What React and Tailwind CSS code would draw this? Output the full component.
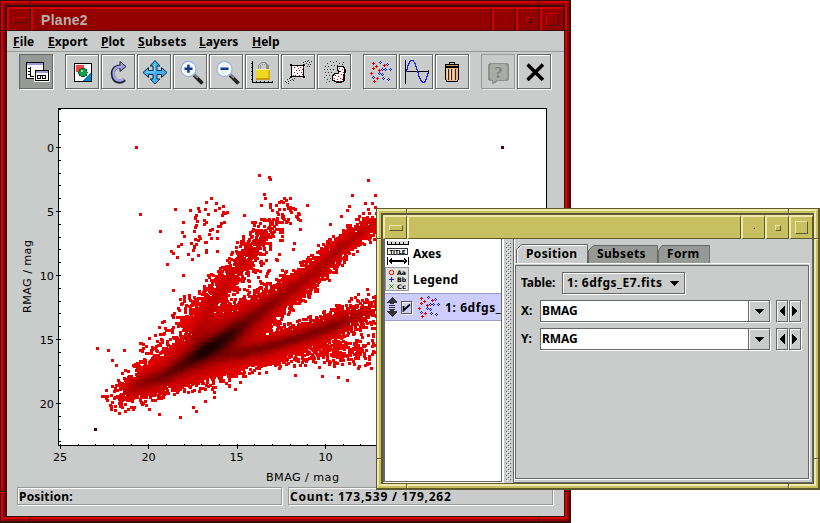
import React from "react";

const FONT = "font-['Noto_Sans','Open_Sans',sans-serif]";

/* ---------- window decorations ---------- */

const RED = {
  dark: "border-[#3a0c10]",
  tl: "border-t-[#d40003] border-l-[#d40003] border-r-[#940000] border-b-[#940000]",
  br: "border-t-[#940000] border-l-[#940000] border-r-[#d40003] border-b-[#d40003]",
  raised: "bg-[#940000] border-t-[#d40003] border-l-[#d40003] border-r-[#3a0c10] border-b-[#3a0c10]",
  sunk: "border-t-[#d40003] border-l-[#d40003] border-r-[#4a0c10] border-b-[#4a0c10]",
  menu: "border-t-[#c40003] border-l-[#c40003] border-r-[#4a0c10] border-b-[#4a0c10]",
  notchDark: "bg-[#3a0c10]",
  notchLight: "bg-[#d40003]",
};

const GOLD = {
  dark: "border-[#5f5930]",
  tl: "border-t-[#f0e9ab] border-l-[#f0e9ab] border-r-[#c8bf60] border-b-[#c8bf60]",
  br: "border-t-[#c8bf60] border-l-[#c8bf60] border-r-[#f0e9ab] border-b-[#f0e9ab]",
  raised: "bg-[#c8bf60] border-t-[#f0e9ab] border-l-[#f0e9ab] border-r-[#5f5930] border-b-[#5f5930]",
  sunk: "border-t-[#f0e9ab] border-l-[#f0e9ab] border-r-[#5f5930] border-b-[#5f5930]",
  menu: "border-t-[#f0e9ab] border-l-[#f0e9ab] border-r-[#5f5930] border-b-[#5f5930]",
  notchDark: "bg-[#5f5930]",
  notchLight: "bg-[#f0e9ab]",
};

function Notches({ c }) {
  const horizontal = ["top-0 left-[29px]", "top-0 right-[28px]", "bottom-0 left-[29px]", "bottom-0 right-[28px]"];
  const vertical = ["left-0 top-[29px]", "right-0 top-[29px]", "left-0 bottom-[28px]", "right-0 bottom-[28px]"];
  return (
    <>
      {horizontal.map((p) => (
        <div key={p} className={`absolute flex h-[4px] w-[2px] ${p}`}>
          <div className={`w-px ${c.notchDark}`} />
          <div className={`w-px ${c.notchLight}`} />
        </div>
      ))}
      {vertical.map((p) => (
        <div key={p} className={`absolute flex h-[2px] w-[4px] flex-col ${p}`}>
          <div className={`h-px ${c.notchDark}`} />
          <div className={`h-px ${c.notchLight}`} />
        </div>
      ))}
    </>
  );
}

function TitleButton({ c, width, size, menu }) {
  return (
    <div className={`flex shrink-0 items-center justify-center border border-t-2 border-l-2 ${width} ${c.raised}`}>
      <div className={`border ${size} ${menu ? c.menu : c.sunk}`} />
    </div>
  );
}

function Frame({ c, title, place, children }) {
  return (
    <div className={`absolute flex border-t border-r-2 border-b-2 border-l ${c.dark} ${place}`}>
      <div className={`flex flex-1 border-2 ${c.tl}`}>
        <div className={`flex flex-1 border-2 ${c.br}`}>
          <div className={`flex min-w-0 flex-1 flex-col border-t-2 border-r border-b border-l-2 ${c.dark}`}>
            <div className="flex h-[24px] shrink-0">
              <TitleButton c={c} menu width="w-[24px]" size="h-[6px] w-[14px]" />
              <div className={`flex flex-1 items-center border border-t-2 border-l-2 pl-2 ${c.raised}`}>
                <span className="font-['Liberation_Sans',Arial,sans-serif] text-[14px] leading-none font-bold tracking-[0.3px] text-[#b4b1ac]">
                  {title}
                </span>
              </div>
              <TitleButton c={c} width="w-[24px]" size="h-[2px] w-[2px]" />
              <TitleButton c={c} width="w-[24px]" size="h-[6px] w-[6px]" />
              <TitleButton c={c} width="w-[24px]" size="h-[13px] w-[13px]" />
            </div>
            {children}
          </div>
        </div>
      </div>
      <Notches c={c} />
    </div>
  );
}

/* ---------- toolbar icons ---------- */

function Svg({ children, w = 34, h = 34, crisp = true }) {
  return (
    <svg width={w} height={h} viewBox={`0 0 ${w} ${h}`} shapeRendering={crisp ? "crispEdges" : "auto"} fill="none" className="block shrink-0">
      {children}
    </svg>
  );
}

const IconWindows = () => (
  <Svg>
    <path d="M6 7h18v17H6z" fill="#fff" stroke="none" />
    <path d="M6.500 7.500h17v16h-17z" stroke="#000" />
    <path d="M7 8h16v2H7z" fill="#9a9ad2" />
    <path d="M10.500 12v9.500H16M8 13.500h2M8 16.500h2M8 19.500h2" stroke="#000" />
    <path d="M14 15h16v12H14z" fill="#fff" />
    <path d="M15.500 15.500h13v10h-13z" stroke="#000" />
    <path d="M16 16h12v2H16z" fill="#9a9ad2" />
    <path d="M17.500 20.500h3v3h-3zM22.500 20.500h3v3h-3z" stroke="#000" />
    <path d="M20 20h2v1h-2z" fill="#000" />
  </Svg>
);

const IconExport = () => (
  <Svg>
    <path d="M8.500 8.500h17v18h-17z" fill="#fff" stroke="#000" />
    <path d="M10 10h8v7h-8z" fill="#f2444a" />
    <path d="M25 17v9h-9z" fill="#0a86c4" />
    <circle cx="17" cy="17.500" r="4.200" fill="#14a04a" stroke="#0b5c2a" />
    <path d="M15 15h2v2h-2z" fill="#8fe0a8" />
  </Svg>
);

const IconRedo = () => (
  <Svg crisp={false}>
    <path d="M22.500 24.500c-3 3.500-9.500 2.500-11-2c-2-6 0-11 8-11" stroke="#22223a" strokeWidth="4" />
    <path d="M18 6.500l6 5-6 5z" fill="#9a9ad6" stroke="#22223a" />
    <path d="M21.800 24c-3 2.500-8 2-9.500-2c-2-6 0-10.300 7.500-10.300" stroke="#a6a6e2" strokeWidth="2.400" />
  </Svg>
);

const IconMove = () => (
  <Svg crisp={false}>
    <path
      d="M17 5.500l5 5.500h-3v4.500h4.500v-3l5.500 5-5.500 5v-3h-4.500v4.500h3l-5 5-5-5h3v-4.500h-4.500v3l-5.500-5 5.500-5v3h4.500V11h-3z"
      fill="#3fb0f5"
      stroke="#062c50"
    />
    <path d="M16.500 9v7M8 17h8" stroke="#9ad8ff" />
  </Svg>
);

const Magnifier = ({ plus }) => (
  <Svg crisp={false}>
    <path d="M20 20l8.500 8.500" stroke="#222" strokeWidth="3.800" />
    <path d="M20 19l4 4" stroke="#8a8a8a" strokeWidth="2" />
    <circle cx="14.500" cy="14" r="7.500" fill="#eaf2fd" stroke="#9fb4dc" strokeWidth="1.300" />
    <circle cx="14.500" cy="14" r="6" stroke="#fff" strokeWidth="1.500" />
    <path d="M10.500 12.500h8v2.500h-8z" fill="#123a86" />
    {plus && <path d="M13.200 9.700h2.500v8h-2.500z" fill="#123a86" />}
  </Svg>
);

const IconLock = () => (
  <Svg>
    <path d="M6.500 6v21.500H27M5 8.500h2M5 12.500h2M5 16.500h2M5 20.500h2M5 24.500h2M10.500 26v2M14.500 26v2M18.500 26v2M22.500 26v2M26.500 26v2" stroke="#000" />
    <path d="M13.500 15v-4.500q4-5 8 0V15" stroke="#8c8c8c" strokeWidth="2.500" />
    <path d="M13.500 15v-4.500q4-4 7 0" stroke="#c8c8c8" />
    <rect x="10" y="14" width="14" height="10" fill="#f0d820" />
    <path d="M10 14h14v1H10z" fill="#fff59a" />
    <path d="M10 23h14v2H10z" fill="#c89c10" />
    <path d="M22 15h2v8h-2z" fill="#d8b414" />
  </Svg>
);

function dots(list, key) {
  return list.map(([x, y]) => <rect key={`${key}${x}-${y}`} x={x} y={y} width="1" height="1" />);
}

const GREY_BOX = [
  [23, 6], [26, 5], [29, 6], [24, 8], [27, 7], [28, 9], [25, 6], [21, 7], [26, 9], [22, 9], [27, 11], [25, 11],
  [4, 27], [6, 26], [5, 24], [8, 25], [7, 23], [9, 22], [3, 26], [6, 28], [10, 24], [8, 21], [12, 23], [11, 25],
];
const RED_BOX = [
  [12, 12], [15, 11], [18, 12], [20, 14], [14, 15], [17, 15], [12, 17], [15, 18], [19, 17], [13, 20], [17, 20], [20, 19], [11, 20], [21, 12], [16, 13],
];

const IconSubsetBox = () => (
  <Svg>
    <rect x="9.500" y="10.500" width="12" height="11" fill="#fff" stroke="#000" />
    <path d="M8 9h2v2H8zM21 9h2v2h-2zM8 21h2v2H8zM21 21h2v2h-2z" fill="#000" />
    <g fill="#e00000">{dots(RED_BOX, "r")}</g>
    <g fill="#333">{dots(GREY_BOX, "g")}</g>
  </Svg>
);

const GREY_BLOB = [
  [9, 8], [12, 6], [15, 7], [18, 6], [21, 8], [24, 9], [7, 11], [10, 11], [13, 10], [16, 10], [19, 10], [6, 14], [9, 14], [12, 14],
  [15, 14], [7, 17], [10, 17], [13, 17], [8, 20], [11, 20], [6, 22], [9, 24], [12, 23], [8, 27], [11, 26], [25, 7],
];
const RED_BLOB = [
  [21, 13], [24, 14], [22, 16], [25, 17], [20, 18], [23, 19], [17, 20], [20, 21], [25, 21], [16, 23], [19, 24], [22, 23], [18, 26], [24, 24], [21, 26],
];

const IconSubsetBlob = () => (
  <Svg>
    <path d="M20 11.500h5.500l1.500 3v3l-1 2v6l-2 1.500h-6l-3.500-2v-4l2.500-2.500h3l1-2-1.500-2z" fill="#fff" stroke="#000" strokeWidth="1.300" />
    <g fill="#e00000">{dots(RED_BLOB, "r")}</g>
    <g fill="#333">{dots(GREY_BLOB, "g")}</g>
  </Svg>
);

const PLUS = [[3, 2], [6, 5], [3, 7], [9, 9], [1, 12], [14, 4], [7, 17], [4, 20]];
const RINGS = [[10, 1], [17, 3], [12, 8], [15, 8], [20, 8], [9, 12], [3, 16], [13, 17], [18, 18], [12, 13]];

function ScatterGlyph({ size = 22 }) {
  return (
    <svg width={size} height={size + 2} viewBox="0 0 22 24" shapeRendering="crispEdges" className="block shrink-0">
      {PLUS.map(([x, y]) => (
        <path key={`p${x}-${y}`} d={`M${x} ${y}h1v1h1v1h-1v1h-1v-1h-1v-1h1z`} fill="#f00000" />
      ))}
      {RINGS.map(([x, y]) => (
        <path key={`r${x}-${y}`} d={`M${x} ${y}h1v1h-1zM${x - 1} ${y + 1}h1v1h-1zM${x + 1} ${y + 1}h1v1h-1zM${x} ${y + 2}h1v1h-1z`} fill="#1616e0" />
      ))}
    </svg>
  );
}

const IconSine = () => (
  <Svg>
    <path d="M5.500 5v24M5 16.500h24M28.500 15v4" stroke="#000" />
    <path d="M6.500 17C8 9 10 5.500 12 5.500S16 10 17.500 16S21 27.500 23.500 27.500S27 22 28 18" stroke="#2020e0" strokeWidth="1.300" />
  </Svg>
);

const IconTrash = () => (
  <Svg>
    <path d="M13.500 9.500v-2h5v2" stroke="#000" />
    <path d="M9 9h14v3H9z" fill="#000" />
    <path d="M10 10h12v1H10z" fill="#c89878" />
    <path d="M9.500 12.500h13v12l-1.500 2H11l-1.500-2z" fill="#e8b48c" stroke="#000" />
    <path d="M12.500 14v11M15.500 14v11M19.500 14v11" stroke="#3c2414" />
    <path d="M11 13.500v10M14 13.500v11M17.500 13.500v11" stroke="#f6d4b8" />
  </Svg>
);

const IconHelp = () => (
  <Svg>
    <path d="M8.500 8.500h16l1.500 1.500v14l-1.500 1.500h-9l-5 3v-3h-2L7 24V10z" fill="#a9aba9" stroke="#8f918f" strokeWidth="1.500" />
    <text x="12.500" y="22.500" fontSize="16" fontWeight="bold" fill="#7d7f7d" fontFamily="Liberation Serif, serif">?</text>
  </Svg>
);

const IconClose = () => (
  <Svg crisp={false}>
    <path d="M9.500 9.500L25 25M25 9.500L9.500 25" stroke="#000" strokeWidth="3.600" />
  </Svg>
);

function Tool({ children, gap = "ml-[2px]", state }) {
  const look =
    state === "on"
      ? "bg-[#979997] border-[#666866] shadow-[1px_1px_0_#fff]"
      : state === "off"
        ? "border-[#979997] shadow-[1px_1px_0_#e4e6e4]"
        : "border-[#666866] shadow-[inset_1px_1px_0_#fff,1px_1px_0_#fff]";
  return (
    <div className={`flex h-[35px] w-[34px] shrink-0 items-center justify-center border pl-[2px] ${look} ${gap}`}>
      {children}
    </div>
  );
}

/* ---------- density scatter plot ---------- */

function random(seed) {
  let s = seed;
  return () => {
    s = (s + 0x6d2b79f5) | 0;
    let t = Math.imul(s ^ (s >>> 15), 1 | s);
    t = (t + Math.imul(t ^ (t >>> 7), 61 | t)) ^ t;
    return ((t ^ (t >>> 14)) >>> 0) / 4294967296;
  };
}

// Each ridge: [x, y, spread, points per px of length, darkness along the spine]
const RIDGES = [
  [
    [108, 403, 5, 0.8, 0], [122, 396, 6.500, 4, 0.08], [138, 384, 7.500, 22, 0.36], [163, 376, 8, 50, 0.55], [185, 363, 8.500, 70, 0.74], [203, 351, 9.500, 85, 1],
    [224, 338, 10, 75, 0.88], [247, 321, 9, 45, 0.55], [283, 295, 7, 26, 0.35], [317, 270, 6, 16, 0.26], [340, 247, 5.200, 13, 0.26],
    [360, 232, 5.200, 10, 0.2], [384, 217, 6.500, 2.600, 0.02],
  ],
  [
    [196, 335, 9, 20, 0.15], [215, 298, 7, 10, 0.16], [235, 270, 6.500, 7.500, 0.12], [247, 256, 6.500, 6, 0.14], [260, 239, 6.500, 4.500, 0.1], [276, 222, 7, 2.300, 0.02], [292, 205, 7, 1.100, 0],
  ],
  [
    [215, 357, 7, 40, 0.12], [240, 353, 6.500, 35, 0.42], [263, 348, 6.500, 30, 0.5], [303, 336, 6.200, 25, 0.48], [333, 325, 6.200, 20, 0.48], [357, 315, 7, 9, 0.22], [384, 304, 8, 1.600, 0],
  ],
  [[140, 372, 7, 2, 0], [163, 345, 8, 2.200, 0], [200, 310, 9, 2.600, 0], [217, 275, 9, 0.8, 0]],
  [[175, 377, 6, 10, 0], [215, 371, 7.500, 8, 0], [240, 361, 6, 6, 0], [262, 357, 6, 5, 0], [310, 351, 7, 4, 0], [345, 352, 8, 4.500, 0], [384, 340, 10, 0.4, 0]],
  [[183, 265, 9, 0.4, 0], [195, 235, 12, 0.9, 0], [212, 215, 13, 1, 0], [213, 200, 8, 0.3, 0]],
  [[238, 296, 8, 1, 0], [262, 275, 9, 0.8, 0], [275, 250, 12, 0.5, 0]],
  [[200, 365, 10, 8, 0.1], [240, 332, 12, 8, 0.08]],
];

const OUTLIERS = [
  [136, 147], [140, 214], [160, 231], [167, 264], [183, 275], [97, 348], [108, 350], [124, 350], [112, 360], [116, 365], [140, 343],
  [259, 175], [269, 177], [270, 179], [264, 194], [265, 198], [284, 198], [290, 198], [286, 200], [307, 205], [261, 205], [368, 180],
  [352, 195], [375, 195], [372, 203], [365, 203], [349, 206], [347, 210], [341, 216], [330, 224], [318, 245], [211, 198], [206, 202],
  [216, 203], [223, 212], [224, 222], [195, 217], [180, 417], [196, 411], [159, 414], [193, 407], [205, 401], [214, 397], [149, 409],
  [102, 396], [106, 398], [119, 413], [173, 290], [293, 249], [294, 243], [277, 260], [358, 294], [295, 375], [322, 376], [338, 377], [347, 380],
  [350, 354], [364, 356], [365, 365], [359, 366], [373, 334], [373, 343], [373, 351], [229, 386], [235, 389], [240, 382],
  [125, 411], [128, 409], [133, 409], [134, 407], [115, 410], [111, 409], [110, 405], [146, 405], [290, 207], [288, 208], [291, 208], [290, 210],
  [282, 232], [282, 236], [282, 240], [282, 229], [300, 220], [299, 214], [300, 229], [214, 392], [215, 387],
];

function buildDensity() {
  const X0 = 60, X1 = 377, Y0 = 110, Y1 = 444;
  const W = X1 - X0, H = Y1 - Y0;
  const level = new Int8Array(W * H).fill(-1);
  const rnd = random(20240);
  const normal = () => Math.sqrt(-2 * Math.log(rnd() + 1e-9)) * Math.cos(6.28318 * rnd());

  const shade = (x, y) => {
    let sum = 0;
    for (const r of RIDGES) {
      let best = 0;
      for (let i = 0; i + 1 < r.length; i++) {
        const [ax, ay, as, , ad] = r[i];
        const [bx, by, bs, , bd] = r[i + 1];
        const dx = bx - ax, dy = by - ay;
        const t = Math.max(0, Math.min(1, ((x - ax) * dx + (y - ay) * dy) / (dx * dx + dy * dy)));
        const d = Math.hypot(x - ax - t * dx, y - ay - t * dy);
        const s = as + (bs - as) * t;
        const g = 0.65 * Math.exp((-d * d) / (2 * s * s * 0.36)) + 0.35 * Math.exp((-d * d) / (2 * s * s * 1.7));
        best = Math.max(best, (ad + (bd - ad) * t) * g);
      }
      sum += best;
    }
    return sum;
  };

  const plot = (px, py, noisy) => {
    const x = Math.round(px), y = Math.round(py);
    const v = Math.min(1, shade(x, y) + (noisy ? (rnd() - 0.5) * 0.05 : 0));
    const l = Math.max(0, Math.min(31, Math.round(v * 31)));
    for (let j = -1; j <= 1; j++)
      for (let i = -1; i <= 1; i++) {
        const gx = x + i - X0, gy = y + j - Y0;
        if (gx >= 0 && gx < W && gy >= 0 && gy < H) level[gy * W + gx] = l;
      }
  };

  for (const r of RIDGES)
    for (let i = 0; i + 1 < r.length; i++) {
      const [ax, ay, as, an] = r[i];
      const [bx, by, bs, bn] = r[i + 1];
      const len = Math.hypot(bx - ax, by - ay);
      const nx = -(by - ay) / len, ny = (bx - ax) / len;
      const count = Math.round(((an + bn) / 2) * len);
      for (let k = 0; k < count; k++) {
        let t = rnd();
        if (rnd() * Math.max(an, bn) > an + (bn - an) * t) t = an > bn ? t * rnd() : 1 - (1 - t) * rnd();
        const o = Math.max(-2.6, Math.min(2.6, normal())) * (as + (bs - as) * t);
        plot(ax + (bx - ax) * t + nx * o, ay + (by - ay) * t + ny * o, true);
      }
    }
  OUTLIERS.forEach(([x, y]) => plot(x, y, false));

  const paths = Array.from({ length: 32 }, () => "");
  for (let y = 0; y < H; y++)
    for (let x = 0; x < W; ) {
      const l = level[y * W + x];
      let e = x + 1;
      while (e < W && level[y * W + e] === l) e++;
      if (l >= 0) paths[l] += `M${x + X0} ${y + Y0}h${e - x}v1h${x - e}z`;
      x = e;
    }
  return paths.map((d, i) => ({ d, color: `rgb(${Math.round(236 - 206 * Math.pow(i / 31, 0.88))},0,0)` })).filter((p) => p.d);
}

const DENSITY = buildDensity();

function ticks() {
  let d = "";
  for (let i = -3; i <= 23; i++) {
    const y = Math.round(147 + i * 12.8) + 0.5;
    d += i % 5 === 0 ? `M56 ${y}h5` : `M59 ${y}h2`;
  }
  for (let i = 0; i <= 27; i++) {
    const x = Math.round(60 + i * 17.66) + 0.5;
    d += i % 5 === 0 ? `M${x} 444v5` : `M${x} 444v2`;
  }
  return d;
}

function Plot() {
  return (
    <svg width="557" height="394" viewBox="7 92 557 394" className="block shrink-0">
      <rect x="58" y="108" width="489" height="338" fill="#fff" />
      <g shapeRendering="crispEdges">
        {DENSITY.map((p) => (
          <path key={p.color} d={p.d} fill={p.color} />
        ))}
        <path d="M501 146h3v3h-3zM94 428h3v3h-3z" fill="#4a0000" />
        <path d="M58.500 108.500h488v337h-488z" fill="none" stroke="#000" />
        <path d={ticks()} fill="none" stroke="#000" />
      </g>
      <g fontFamily="'DejaVu Sans', sans-serif" fontSize="11.200" fill="#000">
        <g textAnchor="end">
          <text x="54" y="152">0</text>
          <text x="54" y="216">5</text>
          <text x="54" y="280">10</text>
          <text x="54" y="344">15</text>
          <text x="54" y="408">20</text>
        </g>
        <g textAnchor="middle">
          <text x="60" y="461">25</text>
          <text x="148.500" y="461">20</text>
          <text x="236.500" y="461">15</text>
          <text x="325.500" y="461">10</text>
        </g>
        <text x="266" y="481" textLength="73">BMAG / mag</text>
        <text transform="translate(31 313) rotate(-90)" textLength="73">RMAG / mag</text>
      </g>
    </svg>
  );
}

/* ---------- plot window ---------- */

const MENUS = [
  ["File", "w-[35px] tracking-[0.1px]"], ["Export", "w-[53px] tracking-[0.1px]"], ["Plot", "w-[37px]"], ["Subsets", "w-[61px] tracking-[0.35px]"], ["Layers", "w-[53px]"], ["Help", "w-[40px]"],
];

const etched = "border border-[#979997] shadow-[inset_1px_1px_0_#fff,1px_1px_0_#fff]";
const flush = "border border-[#666866] shadow-[inset_1px_1px_0_#fff,1px_1px_0_#fff]";

function PlotWindow() {
  return (
    <Frame c={RED} title="Plane2" place="left-0 top-0 h-[523px] w-[571px]">
      <div className="flex min-h-0 flex-1 flex-col bg-[#cacccb]">
        <div className="flex h-[21px] shrink-0 items-center border-b border-[#979997] pt-[2px] pl-[6px]">
          {MENUS.map(([m, w]) => (
            <span key={m} className={`${w} text-[12px] leading-none font-bold whitespace-nowrap`}>
              <span className="underline decoration-1 underline-offset-1">{m[0]}</span>
              {m.slice(1)}
            </span>
          ))}
        </div>
        <div className="flex h-[40px] shrink-0 pt-[2px] pl-[12px]">
          <Tool gap="" state="on"><IconWindows /></Tool>
          <Tool gap="ml-[12px]"><IconExport /></Tool>
          <Tool><IconRedo /></Tool>
          <Tool><IconMove /></Tool>
          <Tool><Magnifier plus /></Tool>
          <Tool><Magnifier /></Tool>
          <Tool><IconLock /></Tool>
          <Tool><IconSubsetBox /></Tool>
          <Tool><IconSubsetBlob /></Tool>
          <Tool gap="ml-[12px]"><ScatterGlyph /></Tool>
          <Tool><IconSine /></Tool>
          <Tool><IconTrash /></Tool>
          <Tool gap="ml-[12px]" state="off"><IconHelp /></Tool>
          <Tool><IconClose /></Tool>
        </div>
        <Plot />
        <div className="mt-[1px] flex h-[18px] shrink-0 gap-[6px] pl-[10px] text-[12px] leading-none font-bold">
          <div className={`flex w-[265px] items-center pt-px pl-px ${etched}`}><span className="tracking-[0.2px]">Position:</span></div>
          <div className={`flex w-[265px] items-center pt-px pl-px ${etched}`}><span className="tracking-[0.78px]">Count: 173,539 / 179,262</span></div>
        </div>
      </div>
    </Frame>
  );
}

/* ---------- control window ---------- */

const IconAxes = () => (
  <Svg w={24} h={24}>
    <path d="M2 0h20v4H2z" fill="#d8dad8" />
    <path d="M1 3.500h21M1.500 0v4M22.500 0v4M5.500 1v2M9.500 1v2M13.500 1v2M17.500 1v2" stroke="#000" />
    <path d="M1.500 7.500h20v6h-20z" fill="#fff" stroke="#333" />
    <text x="3.500" y="12.700" fontSize="5.500" fontWeight="bold" textLength="16" fill="#000" fontFamily="DejaVu Sans, sans-serif">TITLE</text>
    <path d="M1.500 16v8M22.500 16v8M4 20h16" stroke="#000" strokeWidth="1" />
    <path d="M2 20l4-3v6zM22 20l-4-3v6zM5 19h14v2H5z" fill="#000" />
  </Svg>
);

const IconLegend = () => (
  <Svg w={24} h={24} crisp={false}>
    <rect x="0.500" y="0.500" width="23" height="23" fill="#dfe1df" stroke="#979997" />
    <circle cx="6.500" cy="5.500" r="2.200" stroke="#f00000" />
    <path d="M4 12.500h5M6.500 10v5" stroke="#1616e0" />
    <path d="M4.500 17.500l4 4M8.500 17.500l-4 4" stroke="#20a020" />
    <g fontFamily="DejaVu Sans, sans-serif" fontSize="6.200" fill="#000">
      <text x="12" y="8" textLength="9" lengthAdjust="spacingAndGlyphs">Aa</text>
      <text x="12" y="15.200" textLength="9" lengthAdjust="spacingAndGlyphs">Bb</text>
      <text x="12" y="22.400" textLength="9" lengthAdjust="spacingAndGlyphs">Cc</text>
    </g>
  </Svg>
);

const Caret = () => (
  <svg width="10" height="5" viewBox="0 0 10 5" className="block shrink-0" shapeRendering="crispEdges">
    <path d="M0 0h10L5 5z" />
  </svg>
);

function Field({ label, value, gap }) {
  return (
    <div className={`flex h-[22px] items-center ${gap}`}>
      <span className="w-[19px]">{label}</span>
      <div className="flex h-[22px] w-[208px] items-center border border-r-0 border-[#666866] bg-white pl-px shadow-[0_1px_0_#fff]">
        <span className="tracking-[-0.1px]">{value}</span>
      </div>
      <div className={`flex h-[22px] w-[22px] items-center justify-center ${flush}`}><Caret /></div>
      <div className={`ml-[6px] flex h-[22px] w-[12px] items-center justify-center ${flush}`}>
        <svg width="6" height="10" viewBox="0 0 6 10" className="block shrink-0" shapeRendering="crispEdges"><path d="M6 0v10L0 5z" /></svg>
      </div>
      <div className={`ml-[1px] flex h-[22px] w-[12px] items-center justify-center ${flush}`}>
        <svg width="6" height="10" viewBox="0 0 6 10" className="block shrink-0" shapeRendering="crispEdges"><path d="M0 0v10l6-5z" /></svg>
      </div>
    </div>
  );
}

function Tab({ label, width, active }) {
  const h = active ? 19 : 18;
  return (
    <div className={`relative z-10 flex items-center ${active ? "h-[19px] pl-[10px]" : "h-[18px] pl-[9px]"} ${width}`}>
      <svg className="absolute inset-0 h-full w-full" viewBox={`0 0 72 ${h}`} preserveAspectRatio="none">
        <path d={`M0.500 ${h}V5.500L5.500 0.500H71.500V${h}`} fill={active ? "#cacccb" : "#979997"} stroke="#666866" vectorEffect="non-scaling-stroke" />
        {active && <path d={`M1.500 ${h}V6L6 1.500H70.500`} fill="none" stroke="#fff" />}
      </svg>
      <span className="relative tracking-[0.35px]">{label}</span>
    </div>
  );
}

const LayerArrows = () => (
  <Svg w={10} h={20}>
    <path d="M5 0L0 5v1h3v1h4V6h3V5zM5 20l-5-5v-1h3v-1h4v1h3v1z" fill="#333" />
    <path d="M2 8h6v1H2zM2 10h6v1H2zM2 12h6v1H2z" fill="#333" />
  </Svg>
);

function ControlWindow() {
  return (
    <Frame c={GOLD} title="" place="left-[376px] top-[208px] h-[282px] w-[444px]">
      <div className="flex min-h-0 flex-1 bg-[#cacccb] text-[12px] leading-none font-bold">
        <div className="flex w-[121px] shrink-0 border-r-2 border-b border-white">
          <div className="flex min-w-0 flex-1 flex-col overflow-hidden border-r border-b border-l-2 border-[#666866] bg-white">
            <div className="flex h-[27px] shrink-0 items-start gap-[3px] pl-px">
              <div className="mt-[2px]"><IconAxes /></div>
              <span className="pt-[9px]">Axes</span>
            </div>
            <div className="flex h-[27px] shrink-0 items-start gap-[4px]">
              <div className="mt-[1px]"><IconLegend /></div>
              <span className="pt-[8px] tracking-[0.2px]">Legend</span>
            </div>
            <div className="flex h-[28px] shrink-0 items-center border-y border-[#9a9acc] bg-[#ccccff] pl-[2px]">
              <LayerArrows />
              <div className="ml-[4px] flex h-[13px] w-[12px] items-center justify-center border border-[#555] shadow-[inset_1px_1px_0_#fff,1px_1px_0_#fff]">
                <svg width="9" height="9" viewBox="0 0 9 9" className="block shrink-0"><path d="M1.500 3v4.500L8 1.500" stroke="#000" strokeWidth="1.800" fill="none" /></svg>
              </div>
              <div className="ml-[6px]"><ScatterGlyph /></div>
              <span className="ml-[5px] pt-px tracking-[0.6px] whitespace-nowrap">1: 6dfgs_</span>
            </div>
          </div>
        </div>
        <div className="mx-px flex w-[7px] shrink-0 pt-[3px] pb-[2px]">
          <svg width="7" height="239" className="block">
            <defs>
              <pattern id="grip" width="4" height="4" patternUnits="userSpaceOnUse">
                <path d="M0 0h1v1H0zM2 2h1v1H2z" fill="#fff" />
                <path d="M1 1h1v1H1zM3 3h1v1H3z" fill="#666866" />
              </pattern>
            </defs>
            <rect x="1" width="5" height="239" fill="url(#grip)" shapeRendering="crispEdges" />
          </svg>
        </div>
        <div className="flex min-w-0 flex-1 flex-col border border-t-0 border-[#666866] shadow-[inset_1px_0_0_#fff]">
          <div className="flex h-[24px] shrink-0 items-end pl-[2px]">
            <Tab label="Position" width="w-[72px]" active />
            <Tab label="Subsets" width="w-[70px]" />
            <Tab label="Form" width="w-[52px]" />
          </div>
          <div className="mr-[2px] mb-[2px] flex flex-1 border border-white">
            <div className="mt-px flex flex-1 flex-col border border-[#666866] shadow-[1px_1px_0_#fff]">
              <div className="mt-[6px] flex h-[22px] items-center pl-[5px]">
                <span className="w-[41px] tracking-[-0.1px]">Table:</span>
                <div className={`flex h-[22px] w-[123px] items-center justify-between pr-[5px] pl-[4px] ${flush}`}>
                  <span className="tracking-[0.5px]">1: 6dfgs_E7.fits</span>
                  <Caret />
                </div>
              </div>
              <div className="flex flex-col pl-[5px]">
                <Field label="X:" value="BMAG" gap="mt-[6px]" />
                <Field label="Y:" value="RMAG" gap="mt-[6px]" />
              </div>
            </div>
          </div>
        </div>
      </div>
    </Frame>
  );
}

export default function App() {
  return (
    <div className={`relative h-[523px] w-[820px] overflow-hidden bg-white text-black ${FONT}`}>
      <PlotWindow />
      <ControlWindow />
    </div>
  );
}
